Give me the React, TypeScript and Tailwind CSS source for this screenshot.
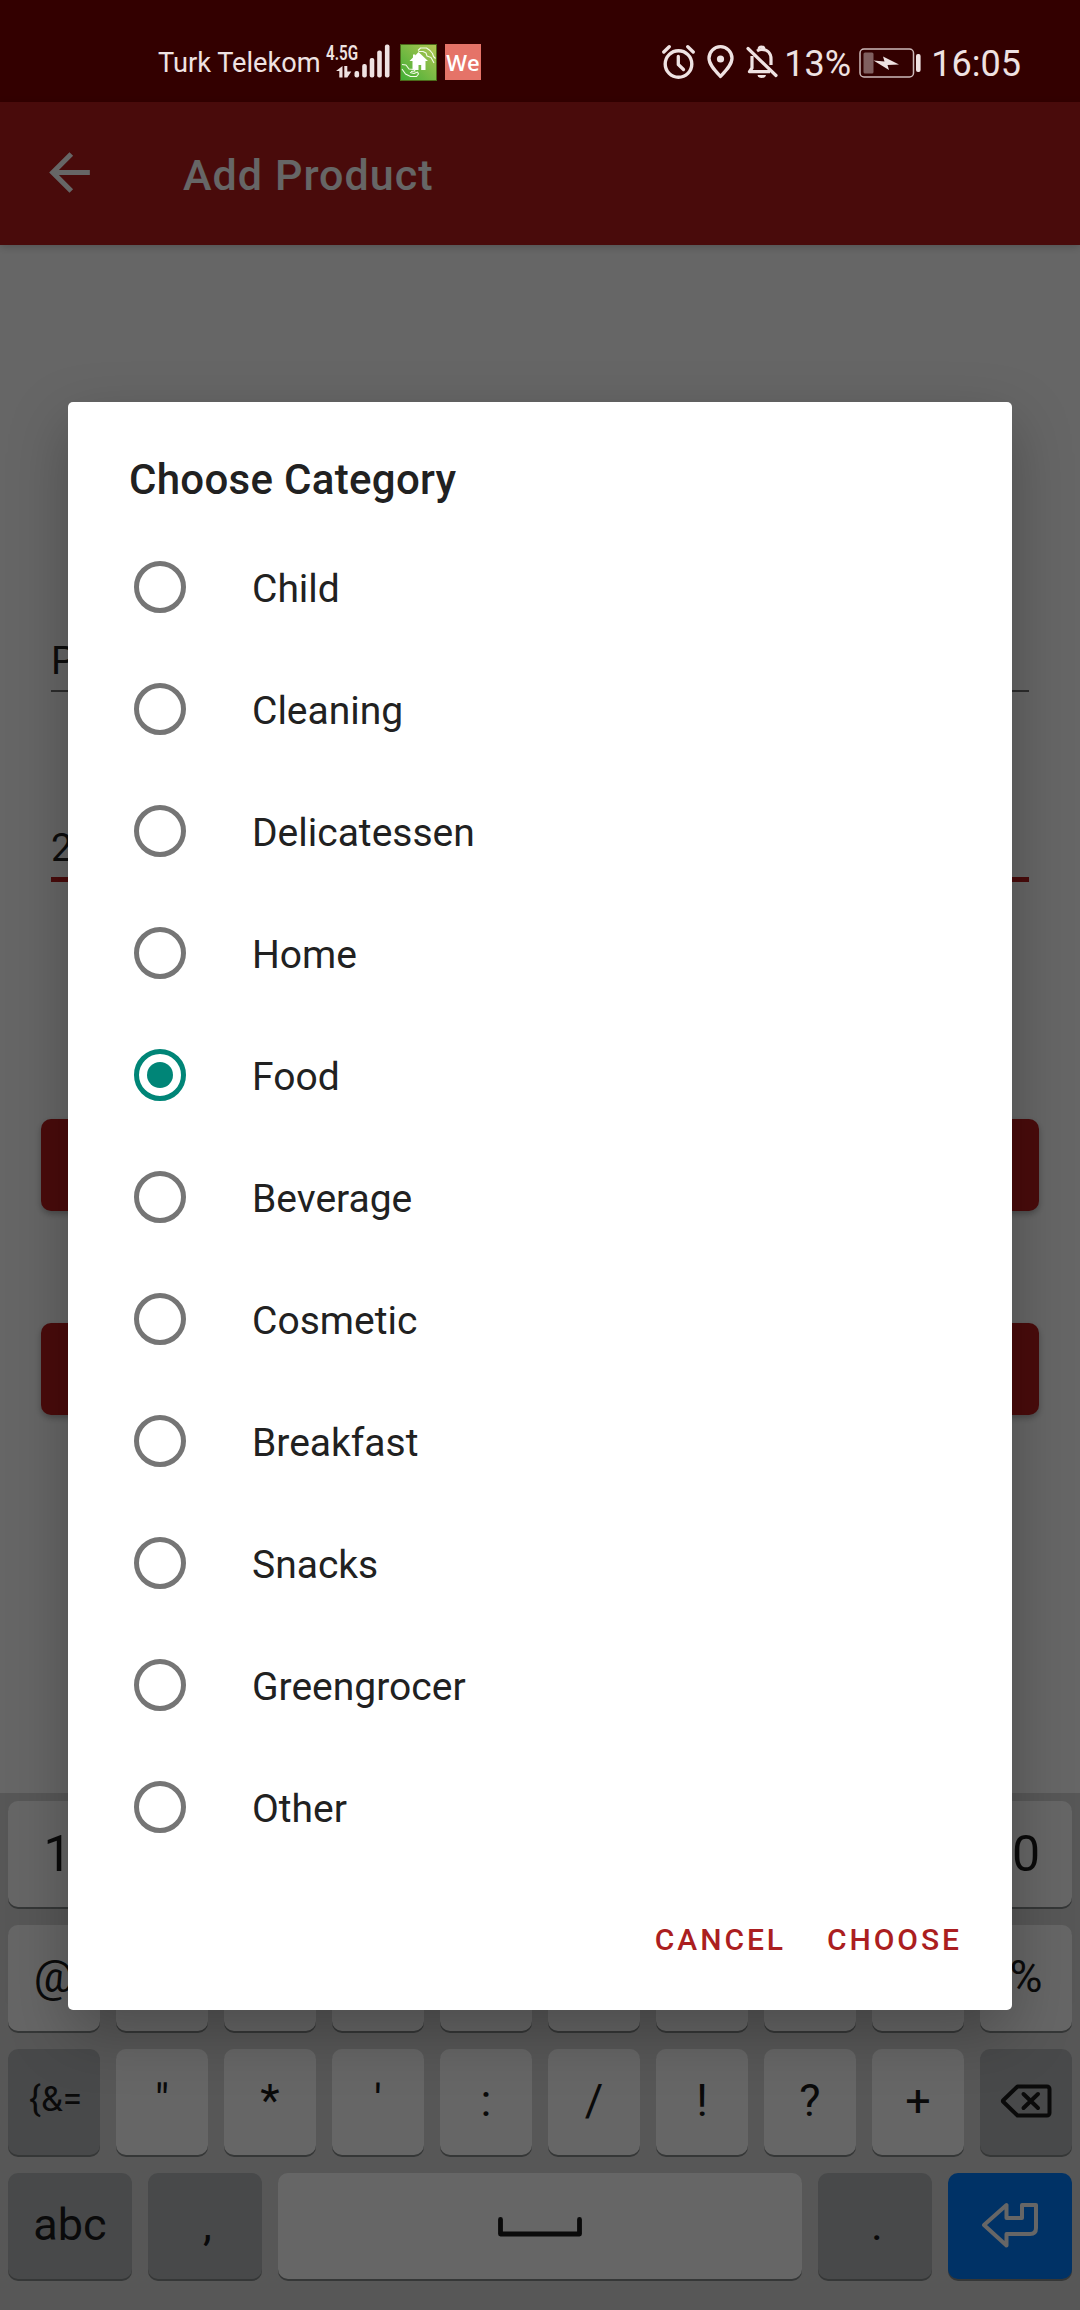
import React from "react";

const categories = [
  "Child",
  "Cleaning",
  "Delicatessen",
  "Home",
  "Food",
  "Beverage",
  "Cosmetic",
  "Breakfast",
  "Snacks",
  "Greengrocer",
  "Other",
];

function SignalIcon() {
  return (
    <svg width="64" height="38" viewBox="0 -2 64 38" className="-mt-[2px] ml-[5px] shrink-0 overflow-visible" fill="#efe2e2">
      <text
        x="0"
        y="15.5"
        fontFamily="Roboto"
        fontWeight="600"
        fontSize="19.5"
        textLength="32"
        lengthAdjust="spacingAndGlyphs"
      >
        4.5G
      </text>
      <path d="M16.500 22v11.500h-3.200v-6.500H10z M18.300 22h3v5.500h4L21.300 33.500h-3z" />
      <rect x="28.500" y="27" width="4.600" height="6.500" rx="2" />
      <rect x="36.200" y="20" width="4.600" height="13.500" rx="2" />
      <rect x="43.700" y="14" width="4.600" height="19.500" rx="2" />
      <rect x="51.200" y="6.500" width="4.600" height="27" rx="2" />
      <rect x="58.900" y="0.500" width="4.600" height="33" rx="2" />
    </svg>
  );
}

function HouseAppIcon() {
  return (
    <svg width="37" height="37" viewBox="0 0 37 37" className="ml-[10px] shrink-0">
      <defs>
        <linearGradient id="leaf" x1="0" y1="1" x2="1" y2="0">
          <stop offset="0" stopColor="#3fae35" />
          <stop offset="1" stopColor="#b4c653" />
        </linearGradient>
      </defs>
      <rect x="0.500" y="0.500" width="36" height="36" fill="url(#leaf)" stroke="#4b6a1a" />
      <path
        d="M18.500 8 28 17h-2.500v9h-4.300v-5h-2.700v5h-6v-9H9.500L13 13.500V10.500h2.300v1z"
        fill="#fff"
      />
      <g fill="none" stroke="#f4fbe8" strokeWidth="1.100" strokeLinejoin="round">
        <path d="M18 6.500l2.500-2.500h6l3.500 2.500 2.500 3 1 3 2 2" />
        <path d="M18.500 7.500h4.500l3 1.500 1 3 4 1.500 3 5.500" />
        <path d="M2 20.500l4 .5 3 4 5 .5 1 1.500-4 .500" />
        <path d="M2 25l3.500 5 5 2.500h6l2-2.500-1-2-3.500 1.500-4-1" />
      </g>
    </svg>
  );
}

function AlarmIcon() {
  return (
    <svg width="33" height="34" viewBox="0 0 33 34" className="shrink-0" fill="none" stroke="#efe2e2">
      <circle cx="16.500" cy="19" r="13.300" strokeWidth="3.400" />
      <path d="M1.800 7l5.400-5.200M31.200 7l-5.400-5.200" strokeWidth="3.400" strokeLinecap="round" />
      <path d="M16.300 11.500v8l5.200 5" strokeWidth="3.300" strokeLinecap="round" strokeLinejoin="round" />
    </svg>
  );
}

function PinIcon() {
  return (
    <svg width="27" height="34" viewBox="0 0 27 34" className="ml-[12px] shrink-0">
      <path
        d="M13.500 31.500C8 25.500 2 19.500 2 13.200a11.500 11.500 0 0 1 23 0C25 19.500 19 25.500 13.500 31.500z"
        fill="none"
        stroke="#efe2e2"
        strokeWidth="3.300"
        strokeLinejoin="round"
      />
      <circle cx="13.500" cy="14" r="3.600" fill="#efe2e2" />
    </svg>
  );
}

function BellOffIcon() {
  return (
    <svg width="32" height="34" viewBox="0 0 32 34" className="ml-[12px] shrink-0" fill="none" stroke="#efe2e2">
      <path d="M6 11v12l-2.500 3.700H24" strokeWidth="3.200" strokeLinejoin="round" />
      <path d="M11 6C13 4.800 14 4.500 15.500 4.500c6 0 9.500 4 9.500 9.500v6" strokeWidth="3.200" />
      <path d="M12.800 4.500a2.700 2.700 0 0 1 5.400 0" strokeWidth="2.600" />
      <path d="M2 3.500L30 30.500" strokeWidth="3.200" strokeLinecap="round" />
      <path d="M11.500 30h8.500a4.300 3.500 0 0 1-8.500 0z" fill="#efe2e2" stroke="none" />
    </svg>
  );
}

function BatteryIcon() {
  return (
    <svg width="63" height="30" viewBox="0 0 63 30" className="ml-[9px] shrink-0">
      <rect x="1" y="1" width="53.500" height="28" rx="4" fill="none" stroke="#cdb9b9" strokeWidth="1.500" />
      <rect x="4.500" y="4.500" width="10" height="21" rx="1.500" fill="#805f5f" />
      <path d="M14.500 12.500l11 1-1.500-5 16 8-11.500.5 1.500 5z" fill="#efe2e2" />
      <rect x="57" y="6" width="4.600" height="18" rx="2" fill="#efe2e2" />
    </svg>
  );
}

function StatusBar() {
  return (
    <header className="flex h-[102px] items-start bg-[#330000] pr-[59px] pl-[158px] text-[#efe2e2]">
      <div className="flex items-start pt-[44px]">
        <span className="w-[163px] pt-[1px] text-[27.200px] leading-[36px] whitespace-nowrap">Turk Telekom</span>
        <SignalIcon />
        <HouseAppIcon />
        <span className="ml-[8px] flex h-[36px] w-[36px] items-center justify-center bg-[#e57368] font-['Open_Sans'] text-[22px] leading-none font-semibold text-white">
          We
        </span>
      </div>
      <div className="ml-auto flex items-start pt-[45px]">
        <AlarmIcon />
        <PinIcon />
        <BellOffIcon />
        <span className="ml-[6px] w-[67px] pt-[1px] text-[36px] leading-[37px] whitespace-nowrap">13%</span>
        <span className="-ml-[1px] pt-[3px]">
          <BatteryIcon />
        </span>
        <span className="ml-[9px] pt-[1px] text-[36px] leading-[37px]">16:05</span>
      </div>
    </header>
  );
}

function AppBar() {
  return (
    <div className="z-10 flex h-[143px] items-center bg-[#b71c1c] pl-[39px] text-white shadow-[0_2px_8px_rgba(0,0,0,0.2)]">
      <svg width="61" height="61" viewBox="0 0 24 24" fill="currentColor" className="mb-[2px]">
        <path d="M20 11H7.830l5.590-5.590L12 4l-8 8 8 8 1.410-1.410L7.830 13H20v-2z" />
      </svg>
      <h1 className="ml-[83px] pt-[2px] text-[43px] leading-[52px] font-medium tracking-[1.060px]">Add Product</h1>
    </div>
  );
}

function Key({
  label,
  className = "",
  dark = false,
  children,
}: {
  label?: string;
  className?: string;
  dark?: boolean;
  children?: React.ReactNode;
}) {
  return (
    <div
      className={
        "flex h-[106px] items-center justify-center rounded-[10px] text-[#191919] shadow-[0_2px_0_#868a8a] " +
        (dark ? "bg-[#b4b7b9] " : "bg-white ") +
        className
      }
    >
      {label}
      {children}
    </div>
  );
}

function Keyboard() {
  return (
    <div className="flex h-[517px] flex-col gap-[18px] bg-[#dadada] px-[8px] pt-[8px]">
      <div className="grid grid-cols-10 gap-[16px] text-[50px]">
        {["1", "", "", "", "", "", "", "", "", "0"].map((k, i) => (
          <Key key={i} label={k} className={k === "1" ? "pl-[7px]" : ""} />
        ))}
      </div>
      <div className="grid grid-cols-10 gap-[16px] text-[45px]">
        {["@", "", "", "", "", "", "", "", "", "%"].map((k, i) => (
          <Key key={i} label={k} className="pb-[3px]" />
        ))}
      </div>
      <div className="grid grid-cols-10 gap-[16px] text-[45px]">
        <Key label="{&=" dark className="pb-[3px] pl-[3px] text-[35px]" />
        {['"', "*", "'", ":", "/", "!", "?", "+"].map((k) => (
          <Key key={k} label={k} className="pb-[3px]" />
        ))}
        <Key dark>
          <svg width="52" height="36" viewBox="0 0 52 36" fill="none" stroke="#191919" className="mb-[3px]">
            <path
              d="M17.500 3.500H47a2.500 2.500 0 0 1 2.500 2.500v24a2.500 2.500 0 0 1-2.500 2.500H17.500L3 18.500a1 1 0 0 1 0-1z"
              strokeWidth="4"
              strokeLinejoin="round"
            />
            <path d="M23.500 11l14.500 14M38 11L23.500 25" strokeWidth="4" strokeLinecap="round" />
          </svg>
        </Key>
      </div>
      <div className="flex gap-[16px] text-[45px]">
        <Key label="abc" dark className="w-[124px] pb-[3px]" />
        <Key label="," dark className="w-[114px] pb-[3px] pl-[5px]" />
        <Key className="flex-1">
          <svg width="84" height="20" viewBox="0 0 84 20" fill="none" stroke="#191919" className="mt-[1px]">
            <path d="M2.500 2.500v14.500h79V2.500" strokeWidth="4.800" strokeLinecap="round" strokeLinejoin="round" />
          </svg>
        </Key>
        <Key label="." dark className="w-[114px] pb-[3px] pl-[4px]" />
        <Key className="w-[124px] bg-[#007dff]!">
          <svg width="58" height="46" viewBox="0 0 58 46" fill="none" stroke="#fff" className="mr-[1px] mb-[3px]">
            <path
              d="M3 23L25.500 3V16H41V3H55V26Q55 32 49 32H25.500V43.500z"
              strokeWidth="4"
              strokeLinejoin="round"
            />
          </svg>
        </Key>
      </div>
    </div>
  );
}

function ProductForm() {
  return (
    <main className="flex flex-1 flex-col px-[41px]">
      <div className="mx-[10px] mt-[391px] flex h-[56px] items-start border-b-2 border-[#6e6e6e] pt-[1px] text-[39px] leading-[48px] text-[#212121]">
        P
      </div>
      <div className="mx-[10px] mt-[132px] flex h-[58px] items-start border-b-[5px] border-[#b71c1c] pt-[1px] text-[39px] leading-[46px] text-[#212121]">
        2
      </div>
      <button aria-label="First action" className="mt-[237px] h-[92px] rounded-[10px] bg-[#b71c1c] shadow-[0_3px_6px_rgba(0,0,0,0.28)]" />
      <button aria-label="Second action" className="mt-[112px] h-[92px] rounded-[10px] bg-[#b71c1c] shadow-[0_3px_6px_rgba(0,0,0,0.28)]" />
    </main>
  );
}

function Radio({ checked }: { checked: boolean }) {
  return (
    <span
      className={
        "flex h-[52px] w-[52px] items-center justify-center rounded-full border-[5px] " +
        (checked ? "border-[#008577]" : "border-[#757575]")
      }
    >
      {checked && <span className="h-[26px] w-[26px] rounded-full bg-[#008577]" />}
    </span>
  );
}

function CategoryDialog() {
  const [selected, setSelected] = React.useState("Food");
  return (
    <div
      role="dialog"
      className="flex h-[1608px] w-[944px] flex-col rounded-[5px] bg-white text-[#212121] shadow-[0_22px_60px_rgba(0,0,0,0.26)]"
    >
      <h2 className="h-[124px] pt-[53px] pl-[61px] text-[42px] leading-[50px] font-medium tracking-[0.300px]">
        Choose Category
      </h2>
      <ul>
        {categories.map((name) => (
          <li
            key={name}
            onClick={() => setSelected(name)}
            className="flex h-[122px] items-center gap-[66px] pl-[66px] text-[39px]"
          >
            <Radio checked={name === selected} />
            <span className="pt-[4px] leading-[48px]">{name}</span>
          </li>
        ))}
      </ul>
      <div className="flex justify-end gap-[41px] pt-[54px] pr-[50px] text-[30px] leading-[36px] font-medium tracking-[2.950px] text-[#ab1e20]">
        <button>CANCEL</button>
        <button>CHOOSE</button>
      </div>
    </div>
  );
}

export default function App() {
  return (
    <div className="relative h-[2310px] w-[1080px] overflow-hidden bg-white font-['Roboto',sans-serif]">
      <div className="flex h-full flex-col">
        <StatusBar />
        <AppBar />
        <ProductForm />
        <Keyboard />
      </div>
      <div className="absolute inset-x-0 top-[102px] bottom-0 z-20 flex items-start justify-center bg-black/60 pt-[300px]">
        <CategoryDialog />
      </div>
    </div>
  );
}
